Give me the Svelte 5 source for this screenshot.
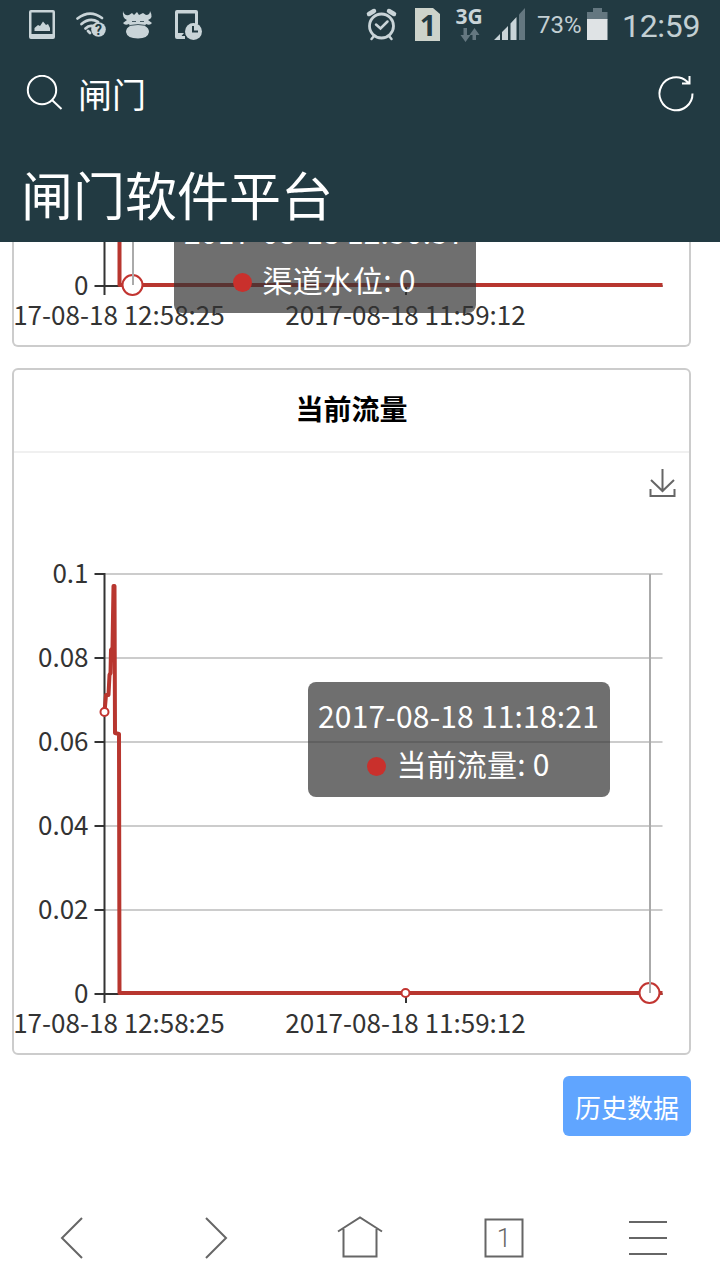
<script lang="ts">
  type Point = [number, number];

  interface Chart {
    id: string;
    title?: string;
    cropTop: number;
    line: Point[];
    dots: Point[];
    pointer: number;
    tooltip: { time: string; label: string; value: number };
  }

  // plot area inside the 675 x 600 canvas
  const left = 90.5;
  const right = 648.5;
  const zero = 541;
  const step = 84;

  const yTicks = ['0', '0.02', '0.04', '0.06', '0.08', '0.1'].map((label, i) => ({ label, y: zero - i * step }));

  const levelChart: Chart = {
    id: 'level',
    cropTop: 497,
    line: [[105.5, 490], [105.5, 540], [648.5, 540]],
    dots: [],
    pointer: 118.5,
    tooltip: { time: '2017-08-18 12:50:57', label: '渠道水位', value: 0 },
  };
  const flowChart: Chart = {
    id: 'flow',
    title: '当前流量',
    cropTop: 0,
    line: [
      [90.5, 259], [92, 242], [94.5, 242], [95.5, 222], [96.5, 220], [97, 197],
      [98.5, 195], [99.5, 133], [100.5, 133], [101, 280], [105, 281], [105.5, 540], [648.5, 540],
    ],
    dots: [[90.5, 259], [391.5, 540]],
    pointer: 635.5,
    tooltip: { time: '2017-08-18 11:18:21', label: '当前流量', value: 0 },
  };

  const path = (line: Point[]) => 'M' + line.map((p) => p.join(' ')).join('L');
</script>

{#snippet card(chart: Chart)}
  <section class="card {chart.id}">
    {#if chart.title}
      <h2>{chart.title}</h2>
    {/if}
    <svg class="plot" width="675" height={600 - chart.cropTop} viewBox="0 {chart.cropTop} 675 {600 - chart.cropTop}">
      {#each yTicks.filter((t) => t.y > chart.cropTop) as tick}
        {#if tick.y < zero}
          <path class="grid" d="M{left} {tick.y}H{right}" />
        {/if}
        <path class="axis" d="M{left - 10} {tick.y}H{left}" />
        <text x={left - 16} y={tick.y + 9} text-anchor="end">{tick.label}</text>
      {/each}
      <path class="axis" d="M{left} {Math.max(chart.cropTop, 120)}V{zero + 9}M{left} {zero}H{right}M392 {zero}V{zero + 9}" />
      <text x="90.5" y="579.5" text-anchor="middle">2017-08-18 12:58:25</text>
      <text x="391.5" y="579.5" text-anchor="middle">2017-08-18 11:59:12</text>
      <path class="series" d={path(chart.line)} />
      {#each chart.dots as [x, y]}
        <circle class="dot" cx={x} cy={y} r="4" />
      {/each}
      <circle class="dot" cx={chart.pointer} cy="540" r="10" />
      <path class="pointer" d="M{chart.pointer + 0.5} {Math.max(chart.cropTop, 121)}V540" />
      {#if chart.title}
        <path class="save" d="M648.500 16V37M637 27L648.500 38L660 27M636.500 36V43H660.500V36" />
      {/if}
    </svg>
    <div class="tooltip">
      <span>{chart.tooltip.time}</span>
      <span class="value"><i></i>{chart.tooltip.label}: {chart.tooltip.value}</span>
    </div>
  </section>
{/snippet}

<div class="screen">
  <header>
    <div class="status">
      <svg width="190" height="50" viewBox="20 0 190 50">
        <!-- picture -->
        <path d="M31 10H53Q55 10 55 12V37Q55 39 53 39H31Q29 39 29 37V12Q29 10 31 10ZM31.500 12.500V34H52.500V12.500Z" fill-rule="evenodd" />
        <path d="M34.500 31V28L38 25L40 26L43 21.500L46 25L48 24L50 28V31Z" />
        <!-- wifi -->
        <g class="stroke" stroke-width="2.800">
          <path d="M77.500 18.500Q90 9 102 18M81.500 24Q90 17 98 22M85.500 28.500Q88.500 25.500 92 26" />
          <path d="M88 31L90 33" />
        </g>
        <circle cx="98.500" cy="29.500" r="7.300" />
        <text class="question" x="98.500" y="34.500" text-anchor="middle">?</text>
        <!-- cow -->
        <path d="M123 11Q124 16 129 15L132 13L134 15L137 12L139 15L143 13L146 15Q150 15 150 11Q154 18 148 20L152 23Q150 26 146 24L145 26Q149 28 149 32Q148 38.500 138 38.500Q127 38.500 126 32Q126 28 130 26L129 24Q125 26 123 23L127 20Q122 18 123 11Z" />
        <path class="cut" stroke-width="0.800" d="M132 21.500H136M140 21.500H144M130 25.500Q138 23.500 146 25.500" />
        <!-- phone with clock -->
        <path d="M177 10H196Q198 10 198 12V24H195V13.500H178V33H184L181.500 36H185V39H177Q175 39 175 37V12Q175 10 177 10Z" />
        <circle cx="193.500" cy="31.500" r="8.500" />
        <path class="cut" stroke-width="2" d="M193 26V31.500H198" />
      </svg>
      <svg width="172" height="50" viewBox="360 0 172 50">
        <!-- alarm -->
        <g class="stroke">
          <circle cx="381.500" cy="26" r="12" stroke-width="2.800" />
          <path d="M376 24.500L380.500 28.500L387.500 21.500M374 36L371.500 39M389 36L391.500 39" stroke-width="2.500" />
          <path d="M369 14L374 11M394 14L389 11" stroke-width="4.500" />
        </g>
        <!-- sim card -->
        <path class="sim" d="M415 8H433L440 14V41H415Z" />
        <text class="sim-no" x="428" y="36" text-anchor="middle">1</text>
        <text class="net" x="469" y="24" text-anchor="middle">3G</text>
        <path class="dim" d="M463.500 28H467V35H470.500L465.500 42L460.500 35H463.500ZM472.500 40H476V35H479.500L474.500 28L469.500 35H472.500Z" />
        <!-- signal -->
        <path d="M494 40L500 34V40ZM502 32L508 26V40H502ZM510.500 23.500L516.500 17V40H510.500Z" />
        <path class="dim" d="M519 14.500L525 8V40H519Z" />
      </svg>
      <span class="percent">73%</span>
      <svg class="battery" width="22" height="33" viewBox="0 0 22 33">
        <path class="dim" d="M6 0H15V4H20.500V12H0V4H6Z" />
        <path d="M0 11H20.500V32H0Z" />
      </svg>
      <span class="clock">12:59</span>
    </div>

    <div class="search">
      <svg width="37" height="37" viewBox="0 0 37 37">
        <circle cx="16" cy="15" r="14.200" />
        <path d="M26 25L35.500 34" />
      </svg>
      <span>闸门</span>
      <svg class="reload" width="38" height="38" viewBox="0 0 38 38">
        <path d="M36.500 18.500A16.500 16.500 0 1 1 31 6.500L33 8.500M33.500 1V8.500H26" />
      </svg>
    </div>

    <h1>闸门软件平台</h1>
  </header>

  <main>
    {@render card(levelChart)}
    {@render card(flowChart)}
    <button type="button">历史数据</button>
  </main>

  <nav>
    <svg viewBox="0 0 144 84"><path d="M82 22L62 42L82 62" /></svg>
    <svg viewBox="0 0 144 84"><path d="M62 22L82 42L62 62" /></svg>
    <svg viewBox="0 0 144 84"><path d="M50 35.500L72 21.500L94 35.500M55.500 33V60.500H88.500V33" /></svg>
    <svg viewBox="0 0 144 84">
      <path d="M53.500 23.500H90.500V60.500H53.500Z" />
      <text x="72" y="51" text-anchor="middle">1</text>
    </svg>
    <svg viewBox="0 0 144 84"><path d="M53 26H91M53 42H91M53 58H91" /></svg>
  </nav>
</div>

<style>
  :global(body) { margin: 0; background: #fff; }

  .screen {
    width: 720px;
    height: 1280px;
    display: flex;
    flex-direction: column;
    overflow: hidden;
    background: #fff;
    font-family: "Noto Sans CJK SC", sans-serif;
  }

  svg { display: block; flex: none; }

  header {
    flex: none;
    height: 242px;
    background: #223a42;
    color: #fff;
  }

  .status {
    display: flex;
    height: 50px;
    padding-left: 20px;
    color: #c3cfd3;
    font-family: Roboto, sans-serif;
  }

  .status svg { fill: #c9d4d8; }
  .status svg:nth-child(2) { margin-left: 150px; }
  .status .stroke { fill: none; stroke: #c9d4d8; stroke-linecap: round; }
  .status .cut { fill: none; stroke: #223a42; }
  .status .dim { fill: #647780; }
  .status .sim { fill: #cdd3cb; }
  .status .question { fill: #223a42; font-size: 14px; font-weight: 700; }
  .status .sim-no { fill: #223a42; font: 700 29px "Open Sans", sans-serif; }
  .net { font: 700 21px "Open Sans", sans-serif; }

  .percent {
    width: 55px;
    padding-left: 5px;
    box-sizing: border-box;
    font-size: 24px;
    line-height: 51px;
    white-space: nowrap;
  }

  .status .battery { margin-top: 8px; fill: #dfe3e5; }

  .clock {
    margin-left: 13px;
    font-size: 32px;
    line-height: 52px;
    letter-spacing: -0.3px;
    white-space: nowrap;
  }

  .search {
    display: flex;
    align-items: center;
    height: 87px;
    padding: 0 26px;
    font-size: 34px;
    line-height: 87px;
  }

  .search svg { fill: none; stroke: #fff; stroke-width: 2; }
  .search span { margin-left: 15px; }
  .search .reload { margin-left: auto; }

  h1 {
    margin: 0;
    padding-left: 21px;
    font-size: 52px;
    line-height: 114px;
    font-weight: 400;
  }

  main {
    flex: 1;
    min-height: 0;
    display: flex;
    flex-direction: column;
    overflow: hidden;
    padding: 0 29px 0 12px;
  }

  .card {
    position: relative;
    flex: none;
    margin-bottom: 21px;
    border: 2px solid #ccc;
    border-radius: 6px;
  }

  .level {
    border-top: none;
    border-top-left-radius: 0;
    border-top-right-radius: 0;
  }

  h2 {
    margin: 0;
    height: 81px;
    border-bottom: 2px solid #f0f0f0;
    color: #000;
    font-size: 28px;
    line-height: 77px;
    font-weight: 700;
    text-align: center;
  }

  .plot text { fill: #333; font-size: 26px; }
  .plot path, .dot { fill: none; stroke-width: 2; }
  .grid { stroke: #ccc; }
  .axis { stroke: #333; }
  .pointer { stroke: #aaa; }
  .save { stroke: #666; }
  .plot .series { stroke: #b8362f; stroke-width: 4; stroke-linejoin: round; }
  .plot .dot { fill: #fff; stroke: #c23531; }

  .tooltip {
    position: absolute;
    left: 293.5px;
    top: 312px;
    width: 302px;
    height: 115px;
    padding-top: 9px;
    box-sizing: border-box;
    border-radius: 8px;
    background: rgba(50, 50, 50, 0.7);
    color: #fff;
    font-size: 30px;
    line-height: 48px;
    letter-spacing: 0.2px;
    text-align: center;
    white-space: nowrap;
  }

  .level .tooltip { left: 159.5px; top: -44px; }
  .tooltip span { display: block; }

  .tooltip i {
    display: inline-block;
    width: 19px;
    height: 19px;
    margin-right: 10px;
    border-radius: 50%;
    background: #c9302c;
  }

  button {
    flex: none;
    align-self: flex-end;
    width: 128px;
    height: 60px;
    padding: 0;
    border: none;
    border-radius: 6px;
    background: #60a5ff;
    color: #fff;
    font-family: inherit;
    font-size: 26px;
  }

  nav {
    flex: none;
    display: flex;
    height: 84px;
  }

  nav svg {
    width: 144px;
    height: 84px;
    fill: none;
    stroke: #666;
    stroke-width: 2;
  }

  nav text { fill: #666; stroke: none; font: 300 26px Roboto, sans-serif; }
</style>
